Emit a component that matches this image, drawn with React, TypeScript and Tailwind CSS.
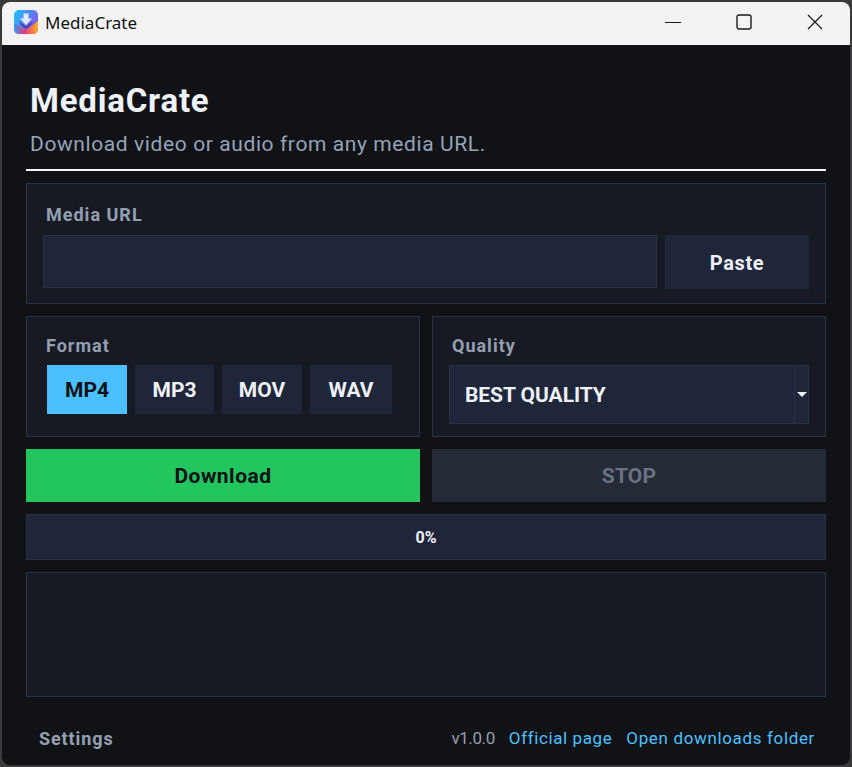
const formats = [
  { label: 'MP4', cls: 'w-[80px] bg-[#4cc0ff] text-[#101216]' },
  { label: 'MP3', cls: 'w-[79px] bg-[#20263a] text-[#eef2f8]' },
  { label: 'MOV', cls: 'w-[80px] bg-[#20263a] text-[#eef2f8]' },
  { label: 'WAV', cls: 'w-[82px] bg-[#20263a] text-[#eef2f8]' },
];

function AppIcon() {
  return (
    <svg width="24" height="24" viewBox="0 0 24 24" className="shrink-0">
      <defs>
        <linearGradient id="tile" x1="0" y1="0" x2="1" y2="0.5">
          <stop offset="0" stopColor="#1fc4fb" />
          <stop offset="0.55" stopColor="#4b8cf5" />
          <stop offset="1" stopColor="#8a55ea" />
        </linearGradient>
        <linearGradient id="tray" x1="0" y1="0" x2="1" y2="0">
          <stop offset="0" stopColor="#2f9cf2" />
          <stop offset="0.45" stopColor="#f0367e" />
          <stop offset="1" stopColor="#fdb31e" />
        </linearGradient>
      </defs>
      <rect width="24" height="24" rx="5" fill="url(#tile)" />
      <path d="M0 13 L12 20 L24 11 V19 Q24 24 19 24 H5 Q0 24 0 19 Z" fill="url(#tray)" />
      <path d="M5 11 L12 16.5 L19 11 L17 15 L12 19 L7 15 Z" fill="#4d3aa8" />
      <path d="M9.5 3.5 H14.5 V8.5 H18 L12 15 L6 8.5 H9.5 Z" fill="#e6e8f8" />
    </svg>
  );
}

function WindowButtons() {
  return (
    <div className="flex items-center h-full">
      <div className="w-[71px] h-full flex items-center justify-center">
        <svg width="16" height="16" viewBox="0 0 16 16"><path d="M0 8.5 H16" stroke="#1a1a1a" strokeWidth="1" /></svg>
      </div>
      <div className="w-[71px] h-full flex items-center justify-center">
        <svg width="16" height="16" viewBox="0 0 16 16"><rect x="1" y="1" width="14" height="14" rx="2" fill="none" stroke="#1a1a1a" strokeWidth="1.4" /></svg>
      </div>
      <div className="w-[71px] h-full flex items-center justify-center">
        <svg width="16" height="16" viewBox="0 0 16 16"><path d="M1 1 L15 15 M15 1 L1 15" stroke="#1a1a1a" strokeWidth="1.2" /></svg>
      </div>
    </div>
  );
}

export default function App() {
  return (
    <div className="w-[852px] h-[767px] bg-[#3a3a3a] p-[2px] font-['Roboto',sans-serif]">
      <div className="w-full h-full rounded-lg overflow-hidden flex flex-col bg-[#101216]">
        {/* title bar */}
        <div className="h-[43px] shrink-0 bg-[#f3f3f3] flex items-center justify-between pl-3 pb-[3px]">
          <div className="flex items-center gap-[7px]">
            <AppIcon />
            <span className="text-[17px] text-[#111] font-['Noto_Sans',sans-serif] leading-none">MediaCrate</span>
          </div>
          <WindowButtons />
        </div>

        <div className="flex-1 flex flex-col px-6">
          {/* header */}
          <div className="h-[84px] pt-[36px] pl-1">
            <h1 className="text-[33px] leading-[40px] font-bold text-[#eef2f8] tracking-[0.8px]">MediaCrate</h1>
          </div>
          <p className="pl-1 text-[21px] leading-[30px] h-[30px] text-[#94a3b8] tracking-[0.6px] whitespace-nowrap">Download video or audio from any media URL.</p>
          <div className="h-[2px] bg-[#f1f5f9] mt-[10px]" />

          {/* url card */}
          <div className="mt-3 h-[121px] border border-[#2a3145] bg-[#171a23] px-4 pt-5">
            <div className="pl-[3px] text-[18px] leading-[22px] font-bold text-[#94a0b2] tracking-[1px]">Media URL</div>
            <div className="mt-[9px] flex gap-2">
              <div className="flex-1 h-[53px] border border-[#2a3145] bg-[#20263a]" />
              <button className="w-[144px] h-[54px] pt-px bg-[#20263a] text-[20px] font-bold text-[#eef2f8] tracking-[0.6px]">Paste</button>
            </div>
          </div>

          {/* format + quality */}
          <div className="mt-3 grid grid-cols-2 gap-3">
            <div className="h-[121px] border border-[#2a3145] bg-[#171a23] px-5 pt-[18px]">
              <div className="-ml-px text-[18px] leading-[22px] font-bold text-[#94a0b2] tracking-[1px]">Format</div>
              <div className="mt-2 flex gap-2">
                {formats.map((f) => (
                  <button key={f.label} className={`h-[49px] pt-[2px] text-[21px] font-bold ${f.cls}`}>
                    {f.label}
                  </button>
                ))}
              </div>
            </div>
            <div className="h-[121px] border border-[#2a3145] bg-[#171a23] px-4 pt-[18px]">
              <div className="pl-[3px] text-[18px] leading-[22px] font-bold text-[#94a0b2] tracking-[1px]">Quality</div>
              <div className="mt-2 h-[59px] flex border border-[#2a3145] bg-[#20263a]">
                <div className="flex-1 flex items-center pl-[15px] pt-[2px] text-[21px] font-bold text-[#eef2f8] tracking-[-0.05px]">BEST QUALITY</div>
                <div className="w-[14px] border-l border-[#2a3145] flex items-center justify-center">
                  <span className="w-0 h-0 border-l-[5px] border-r-[5px] border-t-[5px] border-l-transparent border-r-transparent border-t-[#eef2f8]" />
                </div>
              </div>
            </div>
          </div>

          {/* actions */}
          <div className="mt-3 grid grid-cols-2 gap-3">
            <button className="h-[53px] pt-[2px] bg-[#22c55e] text-[21px] font-bold text-[#0d1117] tracking-[0.5px]">Download</button>
            <button className="h-[53px] pt-[2px] bg-[#252a37] text-[21px] font-bold text-[#697282] tracking-[0.2px]">STOP</button>
          </div>

          {/* progress */}
          <div className="mt-3 h-[46px] pt-[2px] border border-[#2a3145] bg-[#20263a] flex items-center justify-center text-[16px] font-bold text-[#eef2f8]">0%</div>

          {/* log */}
          <div className="mt-3 h-[125px] border border-[#2a3145] bg-[#171a23]" />

          {/* footer */}
          <div className="flex-1 flex items-start justify-between pt-[29px] pl-[13px] pr-[11px]">
            <span className="pt-px text-[18px] leading-[24px] font-bold text-[#94a0b2] tracking-[0.9px]">Settings</span>
            <div className="flex gap-[14px] text-[17px] leading-[24px] tracking-[0.5px]">
              <span className="text-[#94a0b2] tracking-[-0.4px]">v1.0.0</span>
              <span className="text-[#4cc0ff] tracking-[0.6px]">Official page</span>
              <span className="text-[#4cc0ff] tracking-[0.65px]">Open downloads folder</span>
            </div>
          </div>
        </div>
      </div>
    </div>
  );
}
